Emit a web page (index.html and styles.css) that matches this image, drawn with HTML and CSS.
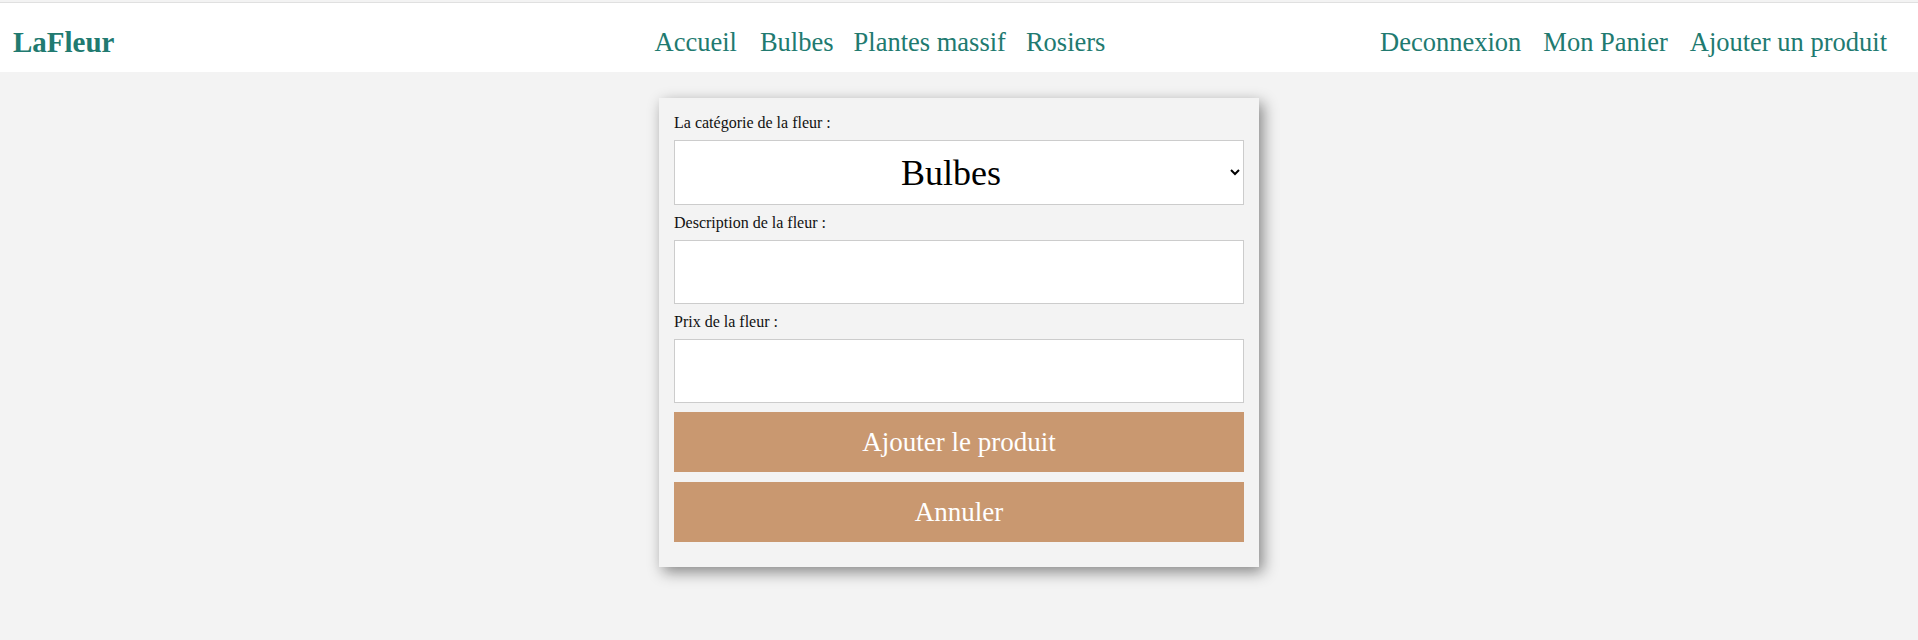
FILE: index.html
```html
<!DOCTYPE html>
<html lang="fr">
<head>
<meta charset="utf-8">
<title>LaFleur - Ajouter un produit</title>
<link rel="stylesheet" href="styles.css">
</head>
<body>
<header class="topbar">
  <a class="logo" href="#">LaFleur</a>
  <nav class="nav-main">
    <a href="#">Accueil</a>
    <a href="#">Bulbes</a>
    <a href="#">Plantes massif</a>
    <a href="#">Rosiers</a>
  </nav>
  <nav class="nav-user">
    <a href="#">Deconnexion</a>
    <a href="#">Mon Panier</a>
    <a href="#">Ajouter un produit</a>
  </nav>
</header>
<main class="page">
  <form class="card">
    <label class="field-label" for="cat">La catégorie de la fleur :</label>
    <select id="cat" class="field select">
      <option>Bulbes</option>
      <option>Plantes massif</option>
      <option>Rosiers</option>
    </select>
    <label class="field-label" for="desc">Description de la fleur :</label>
    <input id="desc" class="field" type="text">
    <label class="field-label" for="prix">Prix de la fleur :</label>
    <input id="prix" class="field" type="text">
    <button type="submit" class="btn">Ajouter le produit</button>
    <button type="button" class="btn btn-last">Annuler</button>
  </form>
</main>
</body>
</html>
```
FILE: styles.css
```css
html {
  background: #ffffff;
}
body {
  margin: 0;
  padding-top: 2px;
  background: #f3f3f3;
  font-family: Georgia, "Liberation Serif", serif;
  min-height: 638px;
}
.topbar {
  display: flex;
  align-items: center;
  background: #ffffff;
  border-top: 1px solid #e0e0e0;
  box-sizing: border-box;
  height: 70px;
  padding: 10px 0 0 13px;
}
.topbar a {
  color: #217a70;
  text-decoration: none;
}
.logo {
  font-weight: bold;
  font-size: 29px;
}
.nav-main {
  display: flex;
  gap: 20px;
  margin-left: 540px;
  font-size: 26.5px;
}
.nav-main a:first-child {
  margin-right: 3px;
}
.nav-user {
  display: flex;
  gap: 22px;
  margin-left: auto;
  margin-right: 31px;
  font-size: 26.5px;
}
.page {
  display: flex;
  justify-content: center;
  padding-top: 26px;
}
.card {
  width: 600px;
  box-sizing: border-box;
  padding: 15px;
  background: #f3f3f3;
  box-shadow: 4px 5px 14px rgba(0, 0, 0, 0.45);
  display: flex;
  flex-direction: column;
}
.field-label {
  display: block;
  font-size: 16px;
  line-height: 20px;
  color: #111;
  margin-bottom: 7px;
}
.field {
  display: block;
  width: 100%;
  box-sizing: border-box;
  height: 64px;
  margin: 0 0 8px;
  border: 1px solid #cccccc;
  background: #ffffff;
  font-family: Georgia, "Liberation Serif", serif;
  font-size: 18px;
  padding: 0 10px;
}
.select {
  height: 65px;
  font-size: 36px;
  text-align: center;
  text-align-last: center;
  color: #000;
  border-radius: 0;
  padding-right: 14px;
}
.btn {
  display: block;
  width: 100%;
  height: 60px;
  margin: 1px 0 10px;
  border: none;
  background: #c99870;
  color: #ffffff;
  font-family: Georgia, "Liberation Serif", serif;
  font-size: 27px;
  cursor: pointer;
}
.btn-last {
  margin-top: 0;
}
```
